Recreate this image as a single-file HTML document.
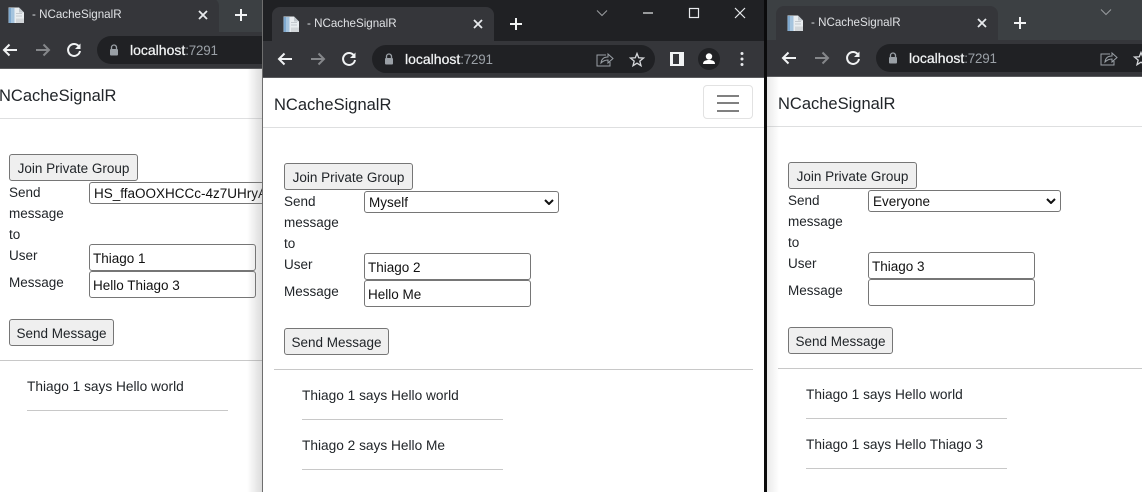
<!DOCTYPE html>
<html><head><meta charset="utf-8"><title>NCacheSignalR</title>
<style>
html,body{margin:0;padding:0;width:1142px;height:492px;overflow:hidden;background:#fff}
body{position:relative;font-family:"Liberation Sans",sans-serif;color:#212529}
.win{position:absolute;top:0;height:492px;overflow:hidden;background:#fff}
.o{position:absolute;width:600px;height:500px}
.o>*{position:absolute}
.strip{left:-20px;top:-20px;width:640px;height:52px;background:#3c4043}
.dark .strip{background:#202124}
.tb{left:-20px;top:32px;width:640px;height:36px;background:#35363a;border-bottom:1px solid #5a5b5e}
.tab{left:-3px;top:-2px;width:222px;height:34px;background:#35363a;border-radius:8px 8px 0 0}
.ttl{left:32px;top:8px;font-size:11.6px;line-height:14px;color:#e0e2e5;white-space:nowrap}
.omni{left:97px;top:36px;width:283px;height:28px;border-radius:14px;background:#202124}
.url{left:130px;top:41px;font-size:14px;line-height:18px;color:#f1f3f4;white-space:nowrap;-webkit-text-stroke:.25px #f1f3f4}
.url span{color:#9aa0a6;font-size:13.4px;letter-spacing:-.2px;-webkit-text-stroke:0}
.ic{left:0;top:-2px;width:600px;height:80px;overflow:visible}
.brand{left:-1px;top:85px;font-size:16.5px;line-height:22px;color:#212529;white-space:nowrap}
.nl{left:-20px;top:118px;width:640px;height:1px;background:#dedfe0}
.ham{left:428px;top:76px;width:48px;height:32px;border:1px solid #e2e2e2;border-radius:4px;background:#fff}
.ham i{position:absolute;left:13px;width:22px;height:2px;background:#808080}
button{left:9px;height:27px;margin:0;padding:2px 0 0;border:1px solid #767676;border-radius:3px;background:#efefef;font:13.5px "Liberation Sans",sans-serif;color:#212529;box-sizing:border-box}
.lb{left:9px;font-size:13.5px;line-height:21px;color:#212529}
input,select{margin:0;box-sizing:border-box;font:13.5px "Liberation Sans",sans-serif;color:#111;background:#fff;border:1px solid #767676;border-radius:3px}
input{left:89px;width:167px;height:27px;padding:2px 3px 0 3px}
select{left:89px;top:182px;height:22px;padding:0 0 0 4px;appearance:none;-webkit-appearance:none}
.chev{width:10px;height:6px;top:190px}
.hr{left:-1px;top:360px;width:479px;height:1px;background:#c8c8c8}
.m{left:27px;font-size:13.7px;line-height:18px;color:#212529;white-space:nowrap}
.ml{left:27px;width:201px;height:1px;background:#c8c8c8}
.sh{position:absolute;left:247px;top:69px;width:16px;height:423px;background:linear-gradient(to right,rgba(120,120,120,0),rgba(120,120,120,.28))}
.sh3{position:absolute;left:0;top:77px;width:12px;height:415px;background:linear-gradient(to right,rgba(120,120,120,.16),rgba(120,120,120,0))}
</style></head><body>

<svg width="0" height="0" style="position:absolute">
<defs>
<g id="fav"><path d="M8.500 7.500h10.500l5 5V23H8.500z" fill="#e9edf0"/><rect x="8.500" y="8" width="6" height="15" fill="#a5c4de"/><rect x="9" y="8" width="2" height="15" fill="#7fa9cf"/><path d="M19 7.500l5 5h-5z" fill="#c3c9ce"/><rect x="16" y="13" width="6" height="1" fill="#c4c9ce"/><rect x="16" y="15.500" width="6" height="1" fill="#c4c9ce"/><rect x="16" y="18.500" width="8" height="4.500" fill="#d2d6d9"/></g>
<g id="nav" fill="none" stroke-width="2">
<path d="M17 50H4M9.500 44.500L4 50l5.500 5.500" stroke="#f1f3f4"/>
<path d="M36 50h13M43.500 44.500L49 50l-5.500 5.500" stroke="#85878a"/>
<path d="M79 46.500A6 6 0 1 0 80 51" stroke="#f1f3f4"/>
<path d="M80.500 43.500v5.500h-5.500z" fill="#f1f3f4" stroke="none"/>
<rect x="110" y="49" width="8" height="6.500" rx="1" fill="#9aa0a6" stroke="none"/>
<path d="M111.500 49v-1.500a2.500 2.500 0 0 1 5 0V49" stroke="#9aa0a6" stroke-width="1.300"/>
<path d="M331 46h-9v11h13v-4" stroke="#9aa0a6" stroke-width="1"/>
<path d="M326 54c.5-4 3-6 7-6v-3l5 4.500-5 4.500v-3c-3 0-5 1-7 3z" stroke="#9aa0a6" stroke-width="1"/>
<path d="M362 44.500l1.700 4.300 4.800.3-3.700 3 1.200 4.600-4-2.500-4 2.500 1.200-4.600-3.700-3 4.800-.3z" stroke="#d5d7da" stroke-width="1.300"/>
</g>
<g id="tabs" fill="none">
<path d="M199 11l8 8M207 11l-8 8" stroke="#e8eaed" stroke-width="1.800"/>
<path d="M241 9v12M235 15h12" stroke="#f1f3f4" stroke-width="2"/>
<path d="M322 1.500l5 5 5-5" stroke="#9a9da0" stroke-width="1"/>
</g>
<g id="right">
<rect x="395" y="43" width="14" height="14" fill="#f1f3f4"/><rect x="398" y="45" width="6" height="10" fill="#35363a"/>
<circle cx="434" cy="50" r="11" fill="#202124"/>
<circle cx="434" cy="47.500" r="3.200" fill="#fff"/><path d="M428 55c0-3 2.500-4 6-4s6 1 6 4z" fill="#fff"/>
<circle cx="467" cy="44.500" r="1.500" fill="#e8eaed"/><circle cx="467" cy="50" r="1.500" fill="#e8eaed"/><circle cx="467" cy="55.500" r="1.500" fill="#e8eaed"/>
</g>
<path id="chv" d="M1 1l4 4 4-4" fill="none" stroke="#111" stroke-width="2"/>
</defs>
</svg>

<!-- Window 1 -->
<div class="win" style="left:0;width:263px">
<div class="o" style="left:0;top:0">
<div class="strip"></div><div class="tab"></div><div class="tb"></div>
<div class="omni"></div>
<svg class="ic" style="top:0" width="600" height="80"><use href="#fav"/><use href="#tabs"/><use href="#nav"/><use href="#right"/></svg>
<div class="ttl">- NCacheSignalR</div>
<div class="url">localhost<span>:7291</span></div>
<div class="brand" style="left:-1px">NCacheSignalR</div><div class="nl"></div>
<button style="top:154px;width:129px">Join Private Group</button>
<div class="lb" style="top:182px;width:70px">Send<br>message<br>to</div>
<select style="width:320px"><option>HS_ffaOOXHCCc-4z7UHryA</option></select>
<div class="lb" style="top:245px">User</div>
<input style="top:244px" value="Thiago 1">
<div class="lb" style="top:272px">Message</div>
<input style="top:271px" value="Hello Thiago 3">
<button style="top:319px;width:105px">Send Message</button>
<div class="hr" style="width:300px"></div>
<div class="m" style="top:378px">Thiago 1 says Hello world</div><div class="ml" style="top:410px"></div>
</div>
<div class="sh"></div>
</div>

<!-- Window 2 -->
<div class="win dark" style="left:262px;width:502px;border-left:1px solid #6e6e6e;box-sizing:border-box">
<div class="o" style="left:12px;top:9px">
<div class="strip"></div><div class="tab"></div><div class="tb"></div>
<div class="omni"></div>
<svg class="ic" style="top:0" width="600" height="80"><use href="#fav"/><use href="#tabs"/><use href="#nav"/><use href="#right"/>
<path d="M368 4h10" stroke="#e8eaed" stroke-width="1.200" fill="none"/>
<rect x="414.500" y="-.500" width="9" height="9" stroke="#e8eaed" stroke-width="1.200" fill="none"/>
<path d="M460 -1l10 10M470 -1L460 9" stroke="#e8eaed" stroke-width="1.200" fill="none"/></svg>
<div class="ttl">- NCacheSignalR</div>
<div class="url">localhost<span>:7291</span></div>
<div class="brand">NCacheSignalR</div><div class="nl"></div>
<div class="ham"><i style="top:9px"></i><i style="top:16px"></i><i style="top:24px"></i></div>
<button style="top:154px;width:129px">Join Private Group</button>
<div class="lb" style="top:182px;width:70px">Send<br>message<br>to</div>
<select style="width:195px"><option>Myself</option></select>
<svg class="chev" style="left:269px" viewBox="0 0 10 6"><use href="#chv"/></svg>
<div class="lb" style="top:245px">User</div>
<input style="top:244px" value="Thiago 2">
<div class="lb" style="top:272px">Message</div>
<input style="top:271px" value="Hello Me">
<button style="top:319px;width:105px">Send Message</button>
<div class="hr"></div>
<div class="m" style="top:378px">Thiago 1 says Hello world</div><div class="ml" style="top:410px"></div>
<div class="m" style="top:428px">Thiago 2 says Hello Me</div><div class="ml" style="top:460px"></div>
</div>
</div>

<div style="position:absolute;left:764px;top:0;width:3px;height:492px;background:#0b0b0c"></div>

<!-- Window 3 -->
<div class="win" style="left:767px;width:375px">
<div class="o" style="left:12px;top:8px">
<div class="strip"></div><div class="tab"></div><div class="tb"></div>
<div class="omni" style="width:380px"></div>
<svg class="ic" style="top:0" width="600" height="80"><use href="#fav"/><use href="#tabs"/><use href="#nav"/></svg>
<div class="ttl">- NCacheSignalR</div>
<div class="url">localhost<span>:7291</span></div>
<div class="brand">NCacheSignalR</div><div class="nl"></div>
<button style="top:154px;width:129px">Join Private Group</button>
<div class="lb" style="top:182px;width:70px">Send<br>message<br>to</div>
<select style="width:193px"><option>Everyone</option></select>
<svg class="chev" style="left:267px" viewBox="0 0 10 6"><use href="#chv"/></svg>
<div class="lb" style="top:245px">User</div>
<input style="top:244px" value="Thiago 3">
<div class="lb" style="top:272px">Message</div>
<input style="top:271px" value="">
<button style="top:319px;width:105px">Send Message</button>
<div class="hr"></div>
<div class="m" style="top:378px">Thiago 1 says Hello world</div><div class="ml" style="top:410px"></div>
<div class="m" style="top:428px">Thiago 1 says Hello Thiago 3</div><div class="ml" style="top:460px"></div>
</div>
<div class="sh3"></div>
</div>
</body></html>
